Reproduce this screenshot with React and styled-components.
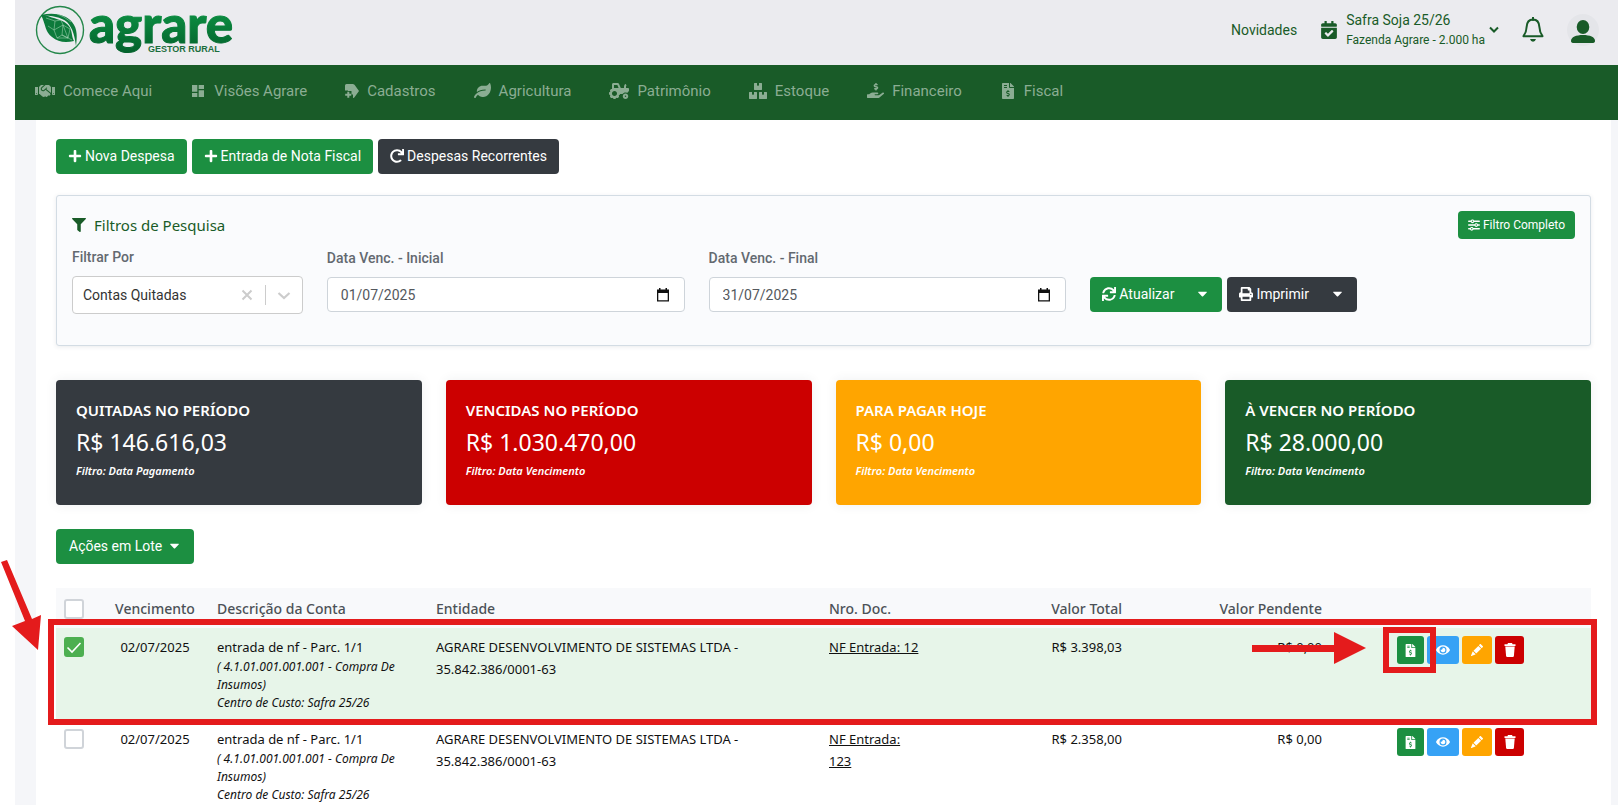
import React from 'react';
import styled, {createGlobalStyle} from 'styled-components';
import {
    FaHandshake, FaLeaf, FaTractor, FaBoxes, FaHandHoldingUsd, FaFileInvoiceDollar, FaCalendarCheck,
    FaPlus, FaRedo, FaFilter, FaSync, FaPrint, FaEye, FaCaretDown,
} from 'react-icons/fa';
import {MdDashboard} from 'react-icons/md';
import {BsPencilFill} from 'react-icons/bs';
import {FaSliders} from 'react-icons/fa6';

const MENU = [
    {icon: <FaHandshake size={20} />, label: 'Comece Aqui'},
    {icon: <MdDashboard size={16} />, label: 'Visões Agrare'},
    {icon: <LabelIcon />, label: 'Cadastros'},
    {icon: <FaLeaf size={17} />, label: 'Agricultura'},
    {icon: <FaTractor size={20} />, label: 'Patrimônio'},
    {icon: <FaBoxes size={18} />, label: 'Estoque'},
    {icon: <FaHandHoldingUsd size={17} />, label: 'Financeiro'},
    {icon: <FaFileInvoiceDollar size={16} />, label: 'Fiscal'},
];

const CARDS = [
    {title: 'QUITADAS NO PERÍODO', value: 'R$ 146.616,03', filter: 'Filtro: Data Pagamento', color: '#353a40'},
    {title: 'VENCIDAS NO PERÍODO', value: 'R$ 1.030.470,00', filter: 'Filtro: Data Vencimento', color: '#cc0000'},
    {title: 'PARA PAGAR HOJE', value: 'R$ 0,00', filter: 'Filtro: Data Vencimento', color: '#ffa500'},
    {title: 'À VENCER NO PERÍODO', value: 'R$ 28.000,00', filter: 'Filtro: Data Vencimento', color: '#195b28'},
];

const ROWS = [
    {id: 1, checked: true, doc: 'NF Entrada: 12', total: 'R$ 3.398,03'},
    {id: 2, checked: false, doc: 'NF Entrada: 123', total: 'R$ 2.358,00'},
];

const COLUMNS = [45, 108, 219, 393, 108, 201, 200, 261];

function Logo() {
    return (
        <LogoSvg viewBox="0 0 200 60" role="img" aria-label="agrare gestor rural">
            <defs>
                <linearGradient id="green" x1="0" y1="0" x2="0" y2="1">
                    <stop offset="0.3" stopColor="#0c8f42" />
                    <stop offset="1" stopColor="#03602c" />
                </linearGradient>
            </defs>
            <circle cx="25" cy="30" r="23.5" fill="none" stroke="#24874a" strokeWidth="1.4" />
            <path d="M6 15C11 25 10 32 17 37C23 42 30 43 39 41C36 36 38 29 32 24C26 19 20 19 10 15Z" fill="#0d7a3b" />
            <path d="M6 15C20 12 31 15 37 22C43 29 42 38 41 46C40 38 38 28 32 22C26 17 17 16 6 15Z" fill="#0d7a3b" />
            <path
                d="M11 18L20 21L26 20L28 25L35 29L33 38M20 21L19 30L28 25L27 35L37 40M13 26L19 30L22 38L27 35L33 38L28 25M22 38L33 38M22 14L29 17L36 22"
                fill="none"
                stroke="#b5dcc1"
                strokeWidth="0.5"
            />
            <text
                x="54"
                y="43"
                fontFamily="Lato, sans-serif"
                fontWeight="900"
                fontSize="51"
                fill="url(#green)"
                stroke="url(#green)"
                strokeWidth="1"
            >
                agrare
            </text>
            <text x="113" y="52" fontFamily="'Liberation Sans', sans-serif" fontWeight="700" fontSize="9" fill="#1b6e3d">GESTOR RURAL</text>
        </LogoSvg>
    );
}

function LabelIcon() {
    return (
        <svg width="14" height="14" viewBox="0 0 14 14" fill="currentColor">
            <path d="M1.5 0H8L9.5 0.8L14 7L9.5 13.2L8.5 14H8V10.5H6.5V7H3V6.5H0V1.5Q0 0 1.5 0Z" />
            <path d="M2.3 7.8H4.3V9.7H6.2V11.7H4.3V13.8H2.3V11.7H0.2V9.7H2.3Z" />
        </svg>
    );
}

function BellIcon() {
    return (
        <svg width="22" height="26" viewBox="0 0 22 26" fill="none" stroke="currentColor" strokeWidth="2">
            <path d="M11 2.5C6.5 2.5 4.8 6.5 4.6 10C4.4 14.5 3.5 16.5 1.5 19.2H20.5C18.5 16.5 17.6 14.5 17.4 10C17.2 6.5 15.5 2.5 11 2.5Z" strokeLinejoin="round" />
            <path d="M11 0.5V3" strokeLinecap="round" />
            <path d="M8 22H14Q13.2 24.8 11 24.8Q8.8 24.8 8 22Z" fill="currentColor" stroke="none" />
        </svg>
    );
}

function CalendarIcon() {
    return (
        <svg width="12" height="14" viewBox="0 0 12 14">
            <path d="M2 0H3.5V1.5H8.5V0H10V1.5H12V13.5H0V1.5H2ZM1.3 5V12.2H10.7V5Z" fill="#111" fillRule="evenodd" />
        </svg>
    );
}

function TrashIcon() {
    return (
        <svg width="12" height="14" viewBox="0 0 12 14" fill="currentColor">
            <path d="M4 0H8L8.6 1.2H11.5V3H0.5V1.2H3.4Z" />
            <path d="M1.3 3.6H10.7L9.9 13Q9.8 14 8.8 14H3.2Q2.2 14 2.1 13Z" />
        </svg>
    );
}

function ActionButtons() {
    return (
        <Actions>
            <ActionButton color="#1c8f41" width={27} aria-label="Nota fiscal"><FaFileInvoiceDollar size={13} /></ActionButton>
            <ActionButton color="#36a2f5" width={32} aria-label="Visualizar"><FaEye size={14} /></ActionButton>
            <ActionButton color="#ffa500" width={30} aria-label="Editar"><BsPencilFill size={12} /></ActionButton>
            <ActionButton color="#cc0000" width={29} aria-label="Excluir"><TrashIcon /></ActionButton>
        </Actions>
    );
}

function App() {
    return (
        <Page>
            <GlobalStyle />
            <Header>
                <Logo />
                <HeaderRight>
                    <NewsLink href="#novidades">Novidades</NewsLink>
                    <FarmButton>
                        <FaCalendarCheck size={18} />
                        <FarmText>
                            <FarmName>Safra Soja 25/26</FarmName>
                            <FarmInfo>Fazenda Agrare - 2.000 ha</FarmInfo>
                        </FarmText>
                        <svg width="10" height="8" viewBox="0 0 10 8" fill="none" stroke="currentColor" strokeWidth="2">
                            <path d="M1 1.5L5 5.5L9 1.5" />
                        </svg>
                    </FarmButton>
                    <IconButton aria-label="Notificações"><BellIcon /></IconButton>
                    <Avatar aria-label="Perfil">
                        <svg width="32" height="32" viewBox="0 0 32 32" fill="currentColor">
                            <ellipse cx="16" cy="13" rx="6.3" ry="6.9" />
                            <path d="M4 27C4 23 9 21 16 21C23 21 28 23 28 27Q28 29 25 29H7Q4 29 4 27Z" />
                        </svg>
                    </Avatar>
                </HeaderRight>
            </Header>
            <Nav>
                {MENU.map(item => (
                    <NavLink key={item.label} href="#menu">{item.icon}{item.label}</NavLink>
                ))}
            </Nav>
            <Main>
                <Content>
                    <Toolbar>
                        <Button><FaPlus size={14} />Nova Despesa</Button>
                        <Button><FaPlus size={14} />Entrada de Nota Fiscal</Button>
                        <Button dark><FaRedo size={14} />Despesas Recorrentes</Button>
                    </Toolbar>
                    <FilterPanel>
                        <FilterHead>
                            <FilterTitle><FaFilter size={14} />Filtros de Pesquisa</FilterTitle>
                            <SmallButton><FaSliders size={12} />Filtro Completo</SmallButton>
                        </FilterHead>
                        <FilterGrid>
                            <Field>
                                <Label htmlFor="filtro">Filtrar Por</Label>
                                <SelectBox>
                                    <Select id="filtro" defaultValue="quitadas">
                                        <option value="quitadas">Contas Quitadas</option>
                                    </Select>
                                    <SelectIcons>
                                        <svg width="20" height="20" viewBox="0 0 20 20" fill="none" stroke="currentColor" strokeWidth="2">
                                            <path d="M5.5 5.5L14.5 14.5M14.5 5.5L5.5 14.5" />
                                        </svg>
                                        <SelectLine />
                                        <svg width="20" height="20" viewBox="0 0 20 20" fill="none" stroke="currentColor" strokeWidth="2.2">
                                            <path d="M4.5 8L10 13L15.5 8" />
                                        </svg>
                                    </SelectIcons>
                                </SelectBox>
                            </Field>
                            <DateField>
                                <Label htmlFor="inicial">Data Venc. - Inicial</Label>
                                <DateBox>
                                    <DateInput id="inicial" defaultValue="01/07/2025" />
                                    <CalendarIcon />
                                </DateBox>
                            </DateField>
                            <DateField>
                                <Label htmlFor="final">Data Venc. - Final</Label>
                                <DateBox>
                                    <DateInput id="final" defaultValue="31/07/2025" />
                                    <CalendarIcon />
                                </DateBox>
                            </DateField>
                            <FilterButtons>
                                <SplitButton><FaSync size={14} />Atualizar<FaCaretDown size={15} /></SplitButton>
                                <SplitButton dark><FaPrint size={14} />Imprimir<FaCaretDown size={15} /></SplitButton>
                            </FilterButtons>
                        </FilterGrid>
                    </FilterPanel>
                    <Cards>
                        {CARDS.map(card => (
                            <Card key={card.title} color={card.color}>
                                <CardTitle>{card.title}</CardTitle>
                                <CardValue>{card.value}</CardValue>
                                <CardFilter>{card.filter}</CardFilter>
                            </Card>
                        ))}
                    </Cards>
                    <BatchButton>Ações em Lote<FaCaretDown size={15} /></BatchButton>
                    <TableBox>
                        <Table>
                            <colgroup>
                                {COLUMNS.map((width, index) => <col key={index} style={{width}} />)}
                            </colgroup>
                            <thead>
                                <tr>
                                    <Th><Checkbox type="checkbox" aria-label="Selecionar todas" /></Th>
                                    <Th align="center">Vencimento</Th>
                                    <Th>Descrição da Conta</Th>
                                    <Th>Entidade</Th>
                                    <Th>Nro. Doc.</Th>
                                    <Th align="right">Valor Total</Th>
                                    <Th align="right">Valor Pendente</Th>
                                    <Th />
                                </tr>
                            </thead>
                            <tbody>
                                {ROWS.map(row => (
                                    <Tr key={row.id} selected={row.checked}>
                                        <Td><Checkbox type="checkbox" defaultChecked={row.checked} aria-label={row.doc} /></Td>
                                        <Td align="center">02/07/2025</Td>
                                        <Td>
                                            entrada de nf - Parc. 1/1
                                            <Detail>( 4.1.01.001.001.001 - Compra De Insumos)</Detail>
                                            <Detail>Centro de Custo: Safra 25/26</Detail>
                                        </Td>
                                        <Td>AGRARE DESENVOLVIMENTO DE SISTEMAS LTDA - 35.842.386/0001-63</Td>
                                        <Td><DocLink href="#doc">{row.doc}</DocLink></Td>
                                        <Td align="right">{row.total}</Td>
                                        <Td align="right">R$ 0,00</Td>
                                        <Td><ActionButtons /></Td>
                                    </Tr>
                                ))}
                            </tbody>
                        </Table>
                        <RowMark />
                        <ButtonMark />
                        <RowArrow viewBox="0 0 44 92">
                            <path d="M1 3L7 1L32 60L41 56L38 91L12 67L25 62Z" />
                        </RowArrow>
                        <ButtonArrow viewBox="0 0 114 32">
                            <path d="M0 13H82V0L114 16L82 32V20H0Z" />
                        </ButtonArrow>
                    </TableBox>
                </Content>
            </Main>
        </Page>
    );
}

export default App;

const GlobalStyle = createGlobalStyle`
    * {
        box-sizing: border-box;
    }
    body {
        margin: 0;
        background: #fff;
        font-family: Roboto, sans-serif;
        font-size: 14px;
    }
    button, input, select {
        font: inherit;
    }
    svg {
        flex-shrink: 0;
    }
`;

const Page = styled.div`
    height: 100vh;
    overflow: hidden;
    padding-left: 15px;
    display: flex;
    flex-direction: column;
`;

const Header = styled.header`
    height: 65px;
    flex-shrink: 0;
    background: #ebebef;
    display: flex;
    align-items: center;
    justify-content: space-between;
    padding: 0 19px 5px 20px;
    color: #195b28;
`;

const LogoSvg = styled.svg`
    width: 200px;
    height: 60px;
    overflow: visible;
`;

const HeaderRight = styled.div`
    display: flex;
    align-items: center;
    gap: 23px;
`;

const NewsLink = styled.a`
    color: #195b28;
    text-decoration: none;
`;

const FarmButton = styled.button`
    display: flex;
    align-items: center;
    gap: 4px;
    border: 0;
    padding: 0;
    background: none;
    color: inherit;
    text-align: left;
`;

const FarmText = styled.span`
    display: flex;
    flex-direction: column;
    padding-left: 4px;
`;

const FarmName = styled.span`
    line-height: 20px;
`;

const FarmInfo = styled.span`
    font-size: 12px;
    line-height: 20px;
`;

const IconButton = styled.button`
    display: flex;
    border: 0;
    padding: 0;
    background: none;
    color: inherit;
`;

const Avatar = styled(IconButton)`
    border-radius: 50%;
    background: #e4e5e9;
`;

const Nav = styled.nav`
    height: 55px;
    flex-shrink: 0;
    background: #195b28;
    display: flex;
    align-items: center;
    gap: 38px;
    padding: 0 20px 4px;
`;

const NavLink = styled.a`
    display: flex;
    align-items: center;
    gap: 8px;
    color: #8bad93;
    font-size: 15px;
    text-decoration: none;
`;

const Main = styled.main`
    flex: 1;
    background: #f5f6f9;
    padding: 0 7px 0 21px;
`;

const Content = styled.div`
    background: #fff;
    min-height: 100%;
    padding: 19px 20px;
`;

const Toolbar = styled.div`
    display: flex;
    gap: 5px;
`;

const Button = styled.button.withConfig({shouldForwardProp: prop => prop !== 'dark'})`
    height: 35px;
    border: 0;
    border-radius: 4px;
    padding: 0 12px 2px;
    display: flex;
    align-items: center;
    gap: 3px;
    color: #fff;
    background: ${props => (props.dark ? '#353a40' : '#1c8f41')};
`;

const SmallButton = styled(Button)`
    height: 28px;
    padding: 0 10px;
    font-size: 12px;
`;

const SplitButton = styled(Button)`
    svg:last-child {
        margin-left: 18px;
    }
`;

const BatchButton = styled(Button)`
    gap: 5px;
    padding-left: 13px;
`;

const FilterPanel = styled.section`
    margin-top: 21px;
    height: 151px;
    border: 1px solid #d3dce4;
    border-radius: 3px;
    background: #fafbfd;
    padding: 15px;
    box-shadow: 0 1px 4px rgba(50, 60, 80, 0.1);
`;

const FilterHead = styled.div`
    display: flex;
    justify-content: space-between;
`;

const FilterTitle = styled.h2`
    display: flex;
    align-items: center;
    gap: 8px;
    margin: 0;
    font: 400 15px 'Noto Sans', sans-serif;
    color: #195b28;
`;

const FilterGrid = styled.div`
    margin-top: 8px;
    display: grid;
    grid-template-columns: 231fr 358fr 358fr 485fr;
    gap: 24px;
`;

const Field = styled.div`
    display: flex;
    flex-direction: column;
    gap: 8px;
`;

const DateField = styled(Field)`
    padding-top: 1px;
`;

const Label = styled.label`
    font-weight: 500;
    line-height: 21px;
    color: #636970;
`;

const SelectBox = styled.div`
    height: 38px;
    display: flex;
    align-items: center;
    border: 1px solid #ccc;
    border-radius: 4px;
    background: #fff;
    padding: 0 8px 0 10px;
`;

const Select = styled.select`
    appearance: none;
    border: 0;
    background: none;
    flex: 1;
    min-width: 0;
    padding: 0;
    color: #333;
`;

const SelectIcons = styled.span`
    display: flex;
    align-items: center;
    gap: 8px;
    color: #ccc;
`;

const SelectLine = styled.span`
    width: 1px;
    height: 20px;
    background: #ccc;
`;

const DateBox = styled.div`
    height: 35px;
    display: flex;
    align-items: center;
    border: 1px solid #ced4da;
    border-radius: 4px;
    background: #fff;
    padding: 0 15px 0 13px;
`;

const DateInput = styled.input`
    border: 0;
    padding: 0;
    outline: 0;
    background: none;
    flex: 1;
    min-width: 0;
    color: #54585d;
`;

const FilterButtons = styled.div`
    display: flex;
    gap: 5px;
    padding-top: 30px;
`;

const Cards = styled.div`
    margin: 34px 0 24px;
    display: grid;
    grid-template-columns: repeat(4, 1fr);
    gap: 24px;
`;

const Card = styled.section`
    height: 125px;
    border-radius: 4px;
    padding: 20px;
    color: #fff;
    font-family: 'Noto Sans', sans-serif;
    background: ${props => props.color};
    box-shadow: 0 0 12px rgba(50, 60, 80, 0.08);
`;

const CardTitle = styled.h3`
    margin: 0;
    font-size: 15px;
    line-height: 21px;
    font-weight: 600;
`;

const CardValue = styled.div`
    font-size: 23px;
    line-height: 42px;
`;

const CardFilter = styled.div`
    font-size: 11px;
    line-height: 16px;
    font-weight: 600;
    font-style: italic;
`;

const TableBox = styled.div`
    position: relative;
    margin-top: 24px;
`;

const Table = styled.table`
    width: 100%;
    table-layout: fixed;
    border-collapse: collapse;
    font-family: 'Noto Sans', sans-serif;
`;

const Th = styled.th`
    height: 40px;
    padding: 0 8px;
    background: #f8f9fb;
    font-weight: 500;
    line-height: 21px;
    color: #4c5157;
    text-align: ${props => props.align || 'left'};
`;

const Tr = styled.tr.withConfig({shouldForwardProp: prop => prop !== 'selected'})`
    height: 92px;
    background: ${props => (props.selected ? '#e7f5e9' : '#fff')};
`;

const Td = styled.td`
    padding: 8px;
    vertical-align: top;
    font-size: 13px;
    line-height: 22px;
    color: #111;
    text-align: ${props => props.align || 'left'};
`;

const Detail = styled.div`
    font-size: 12px;
    line-height: 18px;
    font-style: italic;
`;

const DocLink = styled.a`
    color: #111;
`;

const Checkbox = styled.input`
    appearance: none;
    display: block;
    width: 20px;
    height: 20px;
    margin: 1px 0 0;
    border: 2px solid #d0d4d9;
    border-radius: 3px;
    background: #fff;
    &:checked {
        border-color: #4caf50;
        background: #4caf50 url("data:image/svg+xml,%3Csvg xmlns='http://www.w3.org/2000/svg' viewBox='0 0 16 16'%3E%3Cpath d='M1.5 8.5L6 13L14.5 4' fill='none' stroke='white' stroke-width='1.6'/%3E%3C/svg%3E");
    }
`;

const Actions = styled.div`
    display: flex;
    justify-content: center;
    gap: 3px;
`;

const ActionButton = styled.button.withConfig({shouldForwardProp: prop => prop !== 'width'})`
    width: ${props => props.width}px;
    height: 28px;
    border: 0;
    border-radius: 3px;
    padding: 0;
    display: flex;
    align-items: center;
    justify-content: center;
    color: #fff;
    background: ${props => props.color};
`;

// red marks drawn over the first row
const RowMark = styled.div`
    position: absolute;
    top: 31px;
    left: -8px;
    right: -6px;
    height: 106px;
    border: 6px solid #e41b1c;
    pointer-events: none;
`;

const ButtonMark = styled.div`
    position: absolute;
    top: 39px;
    right: 155px;
    width: 53px;
    height: 46px;
    border: 6px solid #e41b1c;
    pointer-events: none;
`;

const RowArrow = styled.svg`
    position: absolute;
    top: -29px;
    left: -56px;
    width: 44px;
    height: 92px;
    fill: #e41b1c;
`;

const ButtonArrow = styled.svg`
    position: absolute;
    top: 44px;
    right: 225px;
    width: 114px;
    height: 32px;
    fill: #e41b1c;
`;
